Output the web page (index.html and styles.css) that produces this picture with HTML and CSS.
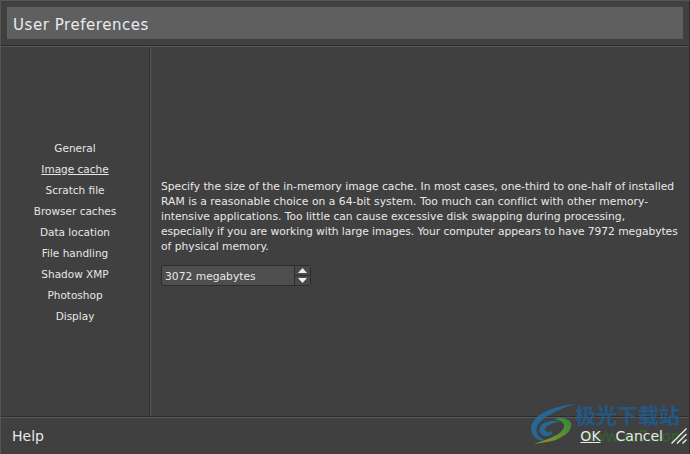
FILE: index.html
```html
<!DOCTYPE html>
<html lang="en">
<head>
<meta charset="utf-8">
<title>User Preferences</title>
<link rel="stylesheet" href="styles.css">
</head>
<body>
<div class="window">
  <header class="header"><h1 class="title">User Preferences</h1></header>
  <main class="body">
    <nav class="nav">
      <a class="nav-item">General</a>
      <a class="nav-item is-active">Image cache</a>
      <a class="nav-item">Scratch file</a>
      <a class="nav-item">Browser caches</a>
      <a class="nav-item">Data location</a>
      <a class="nav-item">File handling</a>
      <a class="nav-item">Shadow XMP</a>
      <a class="nav-item">Photoshop</a>
      <a class="nav-item">Display</a>
    </nav>
    <section class="content">
      <p class="desc">Specify the size of the in-memory image cache. In most cases, one-third to one-half of installed<br><span class="line-wide">RAM is a reasonable choice on a 64-bit system. Too much can conflict with other memory-</span><br>intensive applications. Too little can cause excessive disk swapping during processing,<br><span class="line-tight">especially if you are working with large images. Your computer appears to have 7972 megabytes</span><br>of physical memory.</p>
      <div class="spinner">
        <span class="spinner-value">3072 megabytes</span>
        <span class="spinner-btns">
          <span class="spin-btn"><svg width="9" height="5" viewBox="0 0 9 5"><path d="M4.5 0 9 5H0z" fill="#eee"/></svg></span>
          <span class="spin-btn"><svg width="9" height="5" viewBox="0 0 9 5"><path d="M0 0h9L4.5 5z" fill="#eee"/></svg></span>
        </span>
      </div>
    </section>
  </main>
  <footer class="footer">
    <a class="footer-link">Help</a>
    <div class="actions">
      <a class="footer-link is-default">OK</a>
      <a class="footer-link">Cancel</a>
    </div>
  </footer>
  <svg class="grip" width="16" height="16" viewBox="0 0 16 16"><path d="M0.5 15.5 15.5 0.5M6 15.5l9.5-9.5M11.5 15.5l4-4" stroke="#f2f2f2" stroke-width="1.3" fill="none"/></svg>
  <div class="watermark">
    <svg class="wm-logo" width="60" height="50" viewBox="0 0 60 50">
      <defs>
        <linearGradient id="wm-green" x1="0" x2="1" y1="1" y2="0">
          <stop offset="0" stop-color="#b8a82e"/>
          <stop offset=".45" stop-color="#6fa52c"/>
          <stop offset="1" stop-color="#2f9a3c"/>
        </linearGradient>
      </defs>
      <path d="M50 4C34 6 18 10 10 19 4 26 5 35 12 39c3 2 6 2 8 1-6-2-10-7-8-13C15 18 32 10 50 4z" fill="#1f72ad"/>
      <path d="M36 21c-8-1-18 0-21 6-2 5 2 10 8 9 3-1 5-3 4-5-2 2-6 2-7-1-1-4 8-7 16-9z" fill="#1f72ad"/>
      <path d="M29 19c7-2 15-1 17 4 2 8-8 15-19 18-5 1-12 2-18 3 11-4 27-8 30-17 1-4-3-7-10-8z" fill="url(#wm-green)"/>
    </svg>
    <div class="wm-text">
      <span class="wm-cn">极光下载站</span>
      <span class="wm-url">www.xz7.com</span>
    </div>
  </div>
</div>
</body>
</html>
```
FILE: styles.css
```css
* { box-sizing: border-box; }
html, body { margin: 0; height: 100%; }
body { background: #404040; font-family: "DejaVu Sans", sans-serif; color: #e4e4e4; overflow: hidden; }
.window { position: relative; width: 690px; height: 454px; display: flex; flex-direction: column; border-left: 1px solid #555; border-right: 1px solid #2e2e2e; border-top: 1px solid #555; background: #404040; }
.header { height: 45px; flex: none; padding: 6px; border-bottom: 1px solid #2c2c2c; }
.title { margin: 0; height: 32px; padding: 2px 0 0 6px; background: #5f5f5f; color: #e8ecf0; font-size: 15px; font-weight: 400; line-height: 32px; letter-spacing: .55px; overflow: hidden; }
.body { flex: 1; display: flex; min-height: 0; border-top: 1px solid #585858; }
.nav { width: 149px; flex: none; display: flex; flex-direction: column; justify-content: center; align-items: center; border-right: 1px solid #2c2c2c; }
.nav-item { height: 21px; line-height: 21px; font-size: 10.5px; color: #e6e6e6; }
.is-active { text-decoration: underline; }
.content { flex: 1; display: flex; flex-direction: column; justify-content: center; padding: 0 10px; border-left: 1px solid #5a5a5a; }
.desc { margin: 0 0 11px; font-size: 10.73px; line-height: 15px; color: #e8e8e8; white-space: nowrap; }
.line-wide { letter-spacing: .045px; }
.line-tight { letter-spacing: -.055px; }
.spinner { width: 150px; height: 21px; display: flex; background: #4e4e4e; border: 1px solid #2c2c2c; border-radius: 3px; }
.spinner-value { flex: 1; padding: 1px 0 0 3px; font-size: 10.73px; line-height: 19px; color: #e8e8e8; }
.spinner-btns { width: 16px; display: flex; flex-direction: column; border-left: 1px solid #2c2c2c; background: #484848; }
.spin-btn { flex: 1; display: flex; align-items: center; justify-content: center; }
.spin-btn + .spin-btn { border-top: 1px solid #2c2c2c; }
.footer { height: 37px; flex: none; display: flex; align-items: center; justify-content: space-between; padding: 0 13px 0 11px; border-top: 1px solid #5a5a5a; box-shadow: 0 -1px 0 #2c2c2c; font-size: 14px; color: #e8e8e8; }
.actions { display: flex; gap: 15px; margin-right: 13px; }
.footer-link { position: relative; z-index: 3; }
.is-default { text-decoration: underline; }
.grip { position: absolute; z-index: 3; right: 2px; bottom: 10px; }
.watermark { position: absolute; z-index: 2; left: 524px; top: 399px; display: flex; pointer-events: none; opacity: .8; }
.wm-logo { flex: none; margin-right: -10px; }
.wm-text { display: flex; flex-direction: column; margin-top: 2px; }
.wm-cn { font-family: "Noto Sans CJK SC", sans-serif; font-size: 21px; font-weight: 700; line-height: 24px; color: #1a5f98; }
.wm-url { font-family: "Liberation Sans", sans-serif; font-size: 16px; font-weight: 700; line-height: 18px; margin-top: 2px; padding-left: 6px; color: #2f7a2a; opacity: .6; }
```
